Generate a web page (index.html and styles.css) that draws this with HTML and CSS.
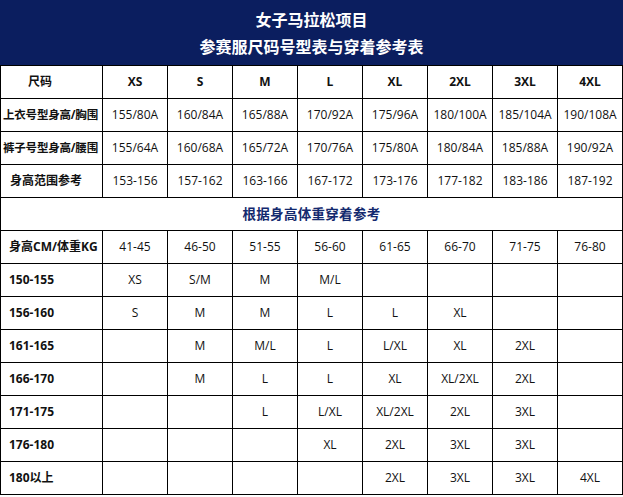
FILE: index.html
```html
<!DOCTYPE html>
<html lang="zh-CN">
<head>
<meta charset="utf-8">
<title>女子马拉松项目 参赛服尺码号型表与穿着参考表</title>
<link rel="stylesheet" href="styles.css">
</head>
<body>
<table class="chart">
  <colgroup>
    <col class="c-label"><col><col><col><col><col><col><col><col>
  </colgroup>
  <thead>
    <tr class="title-row">
      <th colspan="9" class="title">
        <div>女子马拉松项目</div>
        <div>参赛服尺码号型表与穿着参考表</div>
      </th>
    </tr>
  </thead>
  <tbody>
    <tr class="head">
      <th class="lbl lbl-size">尺码</th>
      <th>XS</th><th>S</th><th>M</th><th>L</th><th>XL</th><th>2XL</th><th>3XL</th><th>4XL</th>
    </tr>
    <tr>
      <th class="lbl lbl-tight">上衣号型身高/胸围</th>
      <td>155/80A</td><td>160/84A</td><td>165/88A</td><td>170/92A</td><td>175/96A</td><td>180/100A</td><td>185/104A</td><td>190/108A</td>
    </tr>
    <tr>
      <th class="lbl lbl-tight">裤子号型身高/腰围</th>
      <td>155/64A</td><td>160/68A</td><td>165/72A</td><td>170/76A</td><td>175/80A</td><td>180/84A</td><td>185/88A</td><td>190/92A</td>
    </tr>
    <tr>
      <th class="lbl lbl-range">身高范围参考</th>
      <td>153-156</td><td>157-162</td><td>163-166</td><td>167-172</td><td>173-176</td><td>177-182</td><td>183-186</td><td>187-192</td>
    </tr>
    <tr>
      <th colspan="9" class="section">根据身高体重穿着参考</th>
    </tr>
    <tr>
      <th class="lbl">身高CM/体重KG</th>
      <td>41-45</td><td>46-50</td><td>51-55</td><td>56-60</td><td>61-65</td><td>66-70</td><td>71-75</td><td>76-80</td>
    </tr>
    <tr>
      <th class="lbl">150-155</th>
      <td>XS</td><td>S/M</td><td>M</td><td>M/L</td><td></td><td></td><td></td><td></td>
    </tr>
    <tr>
      <th class="lbl">156-160</th>
      <td>S</td><td>M</td><td>M</td><td>L</td><td>L</td><td>XL</td><td></td><td></td>
    </tr>
    <tr>
      <th class="lbl">161-165</th>
      <td></td><td>M</td><td>M/L</td><td>L</td><td>L/XL</td><td>XL</td><td>2XL</td><td></td>
    </tr>
    <tr>
      <th class="lbl">166-170</th>
      <td></td><td>M</td><td>L</td><td>L</td><td>XL</td><td>XL/2XL</td><td>2XL</td><td></td>
    </tr>
    <tr>
      <th class="lbl">171-175</th>
      <td></td><td></td><td>L</td><td>L/XL</td><td>XL/2XL</td><td>2XL</td><td>3XL</td><td></td>
    </tr>
    <tr>
      <th class="lbl">176-180</th>
      <td></td><td></td><td></td><td>XL</td><td>2XL</td><td>3XL</td><td>3XL</td><td></td>
    </tr>
    <tr>
      <th class="lbl">180以上</th>
      <td></td><td></td><td></td><td></td><td>2XL</td><td>3XL</td><td>3XL</td><td>4XL</td>
    </tr>
  </tbody>
</table>
</body>
</html>
```

FILE: styles.css
```css
html, body {
  margin: 0;
  padding: 0;
  background: #ffffff;
}

body {
  font-family: "Open Sans", "Noto Sans CJK SC", sans-serif;
  color: #111111;
}

.chart {
  width: 623px;
  border-collapse: collapse;
  table-layout: fixed;
}

.c-label {
  width: 102px;
}

.chart th,
.chart td {
  border: 1px solid #000000;
  height: 32px;
  padding: 0;
  text-align: center;
  vertical-align: middle;
  font-size: 12px;
  line-height: 14px;
  white-space: nowrap;
  overflow: hidden;
}

.chart td {
  font-weight: 400;
}

.chart th {
  font-weight: 700;
}

.chart .title {
  height: 63px;
  background: #0b1e5f;
  color: #ffffff;
  font-size: 16px;
  line-height: 27px;
  font-weight: 700;
  border-color: #0b1e5f;
  border-bottom-color: #000000;
  padding: 1px 0 0;
}

.chart .lbl {
  text-align: left;
  padding-left: 8px;
}

.chart .lbl-size {
  padding-left: 27px;
}

.chart .lbl-range {
  padding-left: 9px;
}

.chart .lbl-tight {
  padding-left: 2px;
  font-size: 11.5px;
  letter-spacing: -0.2px;
}

.chart .section {
  color: #13296e;
  font-size: 13.5px;
  letter-spacing: 0.3px;
}
```
